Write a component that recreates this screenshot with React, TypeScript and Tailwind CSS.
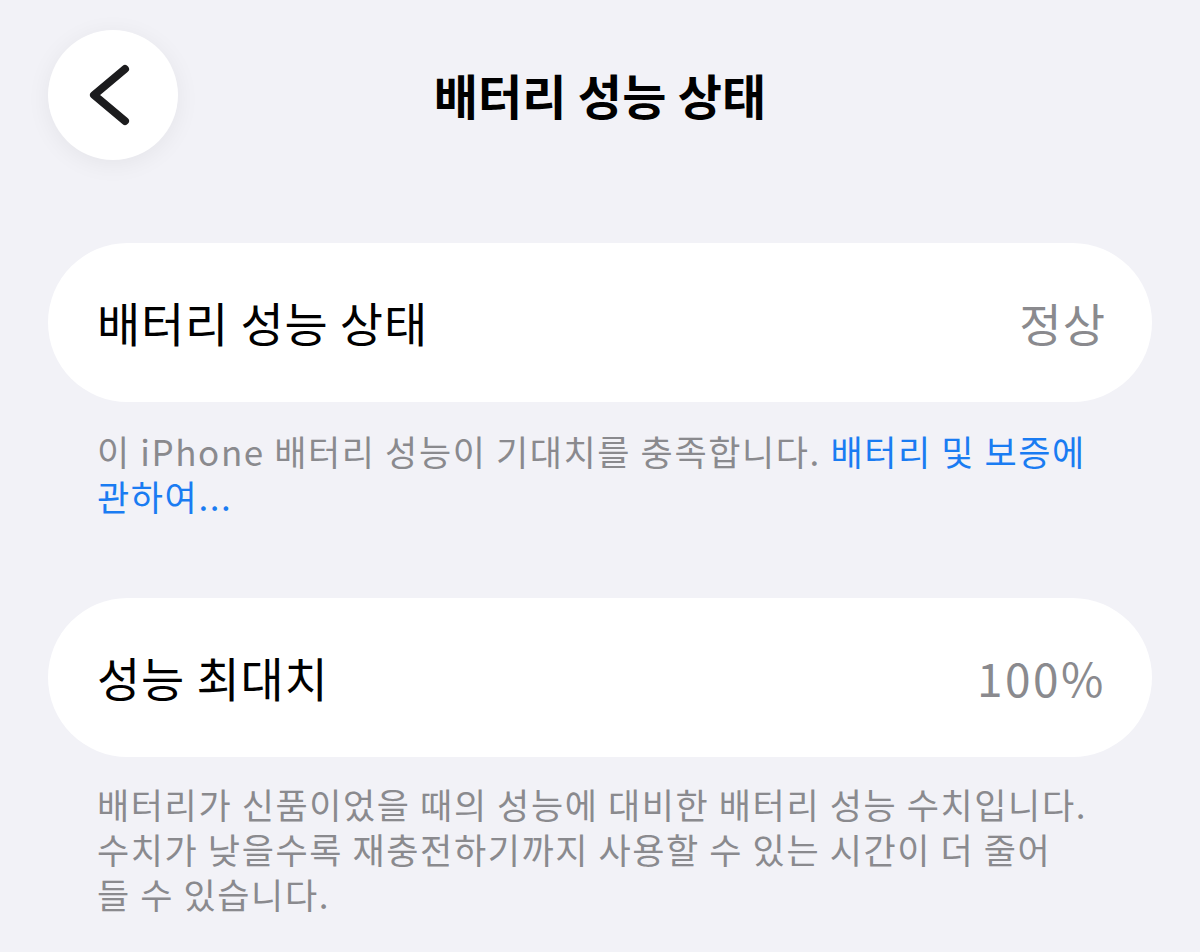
const font = {
  fontFamily: '"Noto Sans CJK KR", "Noto Sans", sans-serif',
};

function Row({ label, value, valueClass }: { label: string; value: string; valueClass: string }) {
  return (
    <div className="flex h-[159px] items-center justify-between rounded-full bg-white pl-[49px] pr-[49px]">
      <span className="text-[47px] tracking-[0.8px] text-black">{label}</span>
      <span className={`text-[#8a8a8e] ${valueClass}`}>{value}</span>
    </div>
  );
}

export default function App() {
  return (
    <div className="min-h-[952px] w-[1200px] bg-[#f2f2f7] px-[48px] pt-[30px]" style={font}>
      {/* header */}
      <div className="grid grid-cols-[130px_1fr_130px] items-center">
        <button className="flex h-[130px] w-[130px] items-center justify-center rounded-full bg-white shadow-[0_4px_24px_rgba(0,0,0,0.06)]">
          <svg width="130" height="130" viewBox="0 0 130 130" fill="none">
            <path
              d="M77 39 L46 65 L77 91"
              stroke="#1c1c1e"
              strokeWidth="8"
              strokeLinecap="round"
              strokeLinejoin="round"
            />
          </svg>
        </button>
        <h1 className="-mt-[3px] text-center text-[48px] font-bold tracking-[0.2px] text-black">
          배터리 성능 상태
        </h1>
        <div />
      </div>

      {/* health */}
      <div className="mt-[83px]">
        <Row label="배터리 성능 상태" value="정상" valueClass="text-[46px] tracking-[1px] -mr-[3px]" />
        <p className="mt-[26px] pl-[49px] pr-[58px] text-[35px] leading-[45px] tracking-[1.6px] text-[#8a8a8e]">
          이 iPhone 배터리 성능이 기대치를 충족합니다.{" "}
          <span className="text-[#1a7cf2]">배터리 및 보증에 관하여...</span>
        </p>
      </div>

      {/* peak performance */}
      <div className="mt-[80px]">
        <Row label="성능 최대치" value="100%" valueClass="text-[46px] tracking-[2.5px] -mr-[3px]" />
        <p className="mt-[24px] pl-[49px] pr-[58px] text-[35px] leading-[45px] tracking-[1.6px] text-[#8a8a8e]">
          배터리가 신품이었을 때의 성능에 대비한 배터리 성능 수치입니다. 수치가 낮을수록 재충전하기까지 사용할 수 있는 시간이 더 줄어
          <br />
          들 수 있습니다.
        </p>
      </div>
    </div>
  );
}
